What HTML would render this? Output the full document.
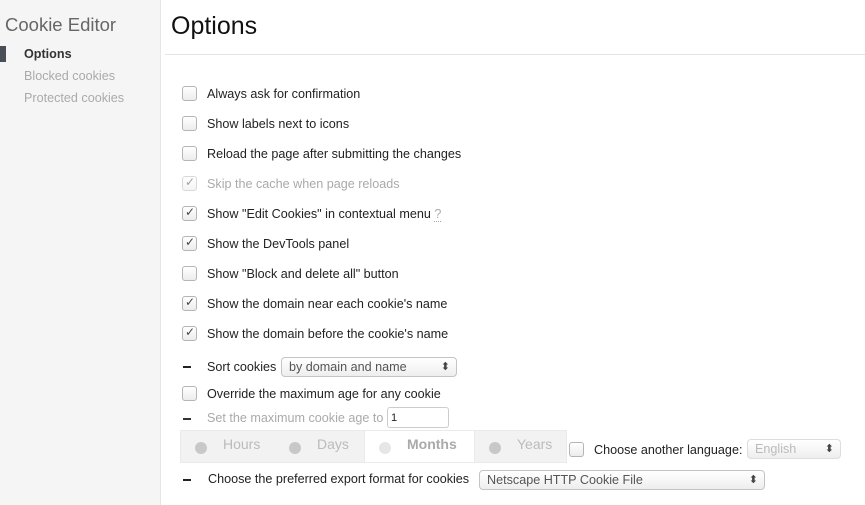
<!DOCTYPE html>
<html><head><style>
body{margin:0;width:865px;height:505px;overflow:hidden;font-family:"Liberation Sans",sans-serif;background:#fff;position:relative;color:#222}
.a{position:absolute;white-space:nowrap}
#side{position:absolute;left:0;top:0;width:160px;height:505px;background:#f5f5f5;border-right:1px solid #e6e6e6}
.cb{position:absolute;left:182px;width:13px;height:13px;border:1px solid #b5b5b5;border-radius:3px;background:linear-gradient(#fff,#ececec)}
.cb.c::after{content:"✓";position:absolute;left:2px;top:-2px;font-size:12px;color:#444}
.t{position:absolute;left:207px;font-size:12.6px;line-height:16px;white-space:nowrap;margin-top:1px}
.dash{position:absolute;left:183px;width:8px;height:2px;background:#222}
.sel{position:absolute;height:20px;border:1px solid #c4c4c4;border-radius:4px;background:linear-gradient(#fff,#eee);font-size:12.6px;line-height:19px;padding-left:7px;box-sizing:border-box;color:#555;white-space:nowrap}
.sel::after{content:"⬍";position:absolute;right:6px;top:0;font-size:11px;color:#444}
.r{position:absolute;top:430px;height:33px;background:#f2f2f2;border:1px solid #eaeaea;box-sizing:border-box;color:#bbb;font-size:14px}
.r .d{position:absolute;left:14px;top:11px;width:12px;height:12px;border-radius:50%;background:#c8c8c8}
.r span{position:absolute;top:5px}
</style></head><body>
<div id="side"></div>
<div class="a" style="left:5px;top:14px;font-size:18.5px;color:#666">Cookie Editor</div>
<div class="a" style="left:0;top:46px;width:6px;height:16px;background:#4a4f57"></div>
<div class="a" style="left:24px;top:47px;font-size:12.6px;font-weight:bold;color:#333">Options</div>
<div class="a" style="left:24px;top:69px;font-size:12.6px;color:#aaa">Blocked cookies</div>
<div class="a" style="left:24px;top:91px;font-size:12.6px;color:#aaa">Protected cookies</div>
<div class="a" style="left:171px;top:12px;font-size:25px;color:#111">Options</div>
<div class="a" style="left:165px;top:54px;width:700px;height:1px;background:#e3e3e3"></div>

<div class="cb" style="top:86px"></div><div class="t" style="top:85px">Always ask for confirmation</div>
<div class="cb" style="top:116px"></div><div class="t" style="top:115px">Show labels next to icons</div>
<div class="cb" style="top:146px"></div><div class="t" style="top:145px">Reload the page after submitting the changes</div>
<div class="cb c" style="top:176px;opacity:.5"></div><div class="t" style="top:175px;color:#aaa">Skip the cache when page reloads</div>
<div class="cb c" style="top:206px"></div><div class="t" style="top:205px">Show "Edit Cookies" in contextual menu <span style="color:#aaa;border-bottom:1px dotted #aaa">?</span></div>
<div class="cb c" style="top:236px"></div><div class="t" style="top:235px">Show the DevTools panel</div>
<div class="cb" style="top:266px"></div><div class="t" style="top:265px">Show "Block and delete all" button</div>
<div class="cb c" style="top:296px"></div><div class="t" style="top:295px">Show the domain near each cookie's name</div>
<div class="cb c" style="top:326px"></div><div class="t" style="top:325px">Show the domain before the cookie's name</div>

<div class="dash" style="top:366px"></div><div class="t" style="top:358px">Sort cookies</div>
<div class="sel" style="left:281px;top:357px;width:176px">by domain and name</div>
<div class="cb" style="top:386px"></div><div class="t" style="top:385px">Override the maximum age for any cookie</div>
<div class="dash" style="top:418px;background:#333"></div><div class="t" style="top:409px;color:#aaa">Set the maximum cookie age to</div>
<div class="a" style="left:387px;top:407px;width:62px;height:21px;border:1px solid #ccc;border-radius:3px;box-sizing:border-box;font-size:11px;padding:4px 3px">1</div>

<div class="r" style="left:180px;width:96px"><div class="d"></div><span style="left:42px">Hours</span></div>
<div class="r" style="left:275px;width:90px;border-left:none"><div class="d"></div><span style="left:42px">Days</span></div>
<div class="r" style="left:364px;width:111px;background:#fff"><div class="d" style="background:#e6e6e6;left:14px"></div><span style="left:42px;font-weight:bold;color:#aaa">Months</span></div>
<div class="r" style="left:474px;width:93px"><div class="d"></div><span style="left:42px">Years</span></div>
<div class="cb" style="left:569px;top:442px"></div>
<div class="t" style="left:594px;top:441px">Choose another language:</div>
<div class="sel" style="left:747px;top:439px;width:94px;color:#bbb;border-color:#ddd">English</div>

<div class="dash" style="top:479px"></div><div class="t" style="left:208px;top:470px">Choose the preferred export format for cookies</div>
<div class="sel" style="left:479px;top:470px;width:286px">Netscape HTTP Cookie File</div>
</body></html>
